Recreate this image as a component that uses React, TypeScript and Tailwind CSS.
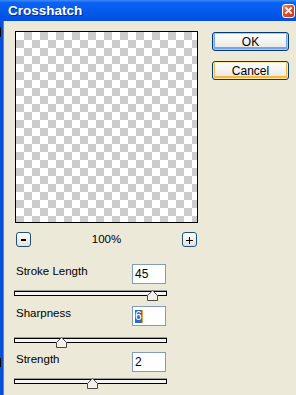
import React from "react";

const font = { fontFamily: '"Liberation Sans", Arial, sans-serif' };

function Thumb({ left }: { left: number }) {
  return (
    <svg
      className="absolute top-[-1px]"
      style={{ left }}
      width="11"
      height="11"
      viewBox="0 0 11 11"
    >
      <path d="M5.5 0.5 L10.5 5.5 L10.5 10.5 L0.5 10.5 L0.5 5.5 Z" fill="#F3F1E8" stroke="#4a4a4a" strokeWidth="1" />
    </svg>
  );
}

function Track({ thumb, className }: { thumb: number; className?: string }) {
  return (
    <div className={"relative ml-[-2px] w-[153px] h-[6px] border-t border-t-[#9d9d9d] bg-black p-[1px] " + (className || "")}>
      <div className="h-[3px] w-full bg-[#F6F5EF]" />
      <Thumb left={thumb} />
    </div>
  );
}

function Field({ label, children, className }: { label: string; children: React.ReactNode; className?: string }) {
  return (
    <div className={"flex items-center h-[20px] " + (className || "")}>
      <span className="mb-[4px] text-[11.5px] text-black leading-none">{label}</span>
      <div className="ml-auto mr-[1px] w-[34px] h-[20px] border border-[#7F9DB9] bg-white flex items-center pl-[2px] text-[12px] text-black leading-none">
        {children}
      </div>
    </div>
  );
}

export default function App() {
  return (
    <div className="w-[296px] h-[395px] overflow-hidden bg-[#ECE9D8] flex flex-col select-none" style={font}>
      {/* title bar */}
      <div className="h-[21px] flex items-center bg-[linear-gradient(to_bottom,#3f8cf8_0%,#0c63f2_12%,#0459ea_55%,#004fe0_100%)]">
        <span
          className="pl-[8px] text-[13.5px] font-bold text-white leading-none"
          style={{ textShadow: "1px 1px 0 #0a2a8a" }}
        >
          Crosshatch
        </span>
        <div className="ml-auto mr-[1px] w-[13px] h-[14px] rounded-[3px] border border-white bg-[linear-gradient(135deg,#f08a6a_0%,#e0502a_45%,#c5381a_100%)] flex items-center justify-center">
          <svg width="7" height="7" viewBox="0 0 7 7">
            <path d="M1 1 L6 6 M6 1 L1 6" stroke="white" strokeWidth="1.8" strokeLinecap="square" />
          </svg>
        </div>
      </div>
      <div className="flex flex-1">
        {/* left frame */}
        <div className="flex">
          <div className="w-[1px] flex flex-col bg-[#0a4fd8]">
            <div className="h-[6px]" />
            <div className="h-[10px] bg-black" />
            <div className="h-[321px]" />
            <div className="h-[9px] bg-black" />
          </div>
          <div className="w-[2px] bg-[#0a4fd8]" />
          <div className="w-[1px] bg-[#3c86f2]" />
        </div>
        {/* content */}
        <div className="flex pl-[11px] pt-[10px]">
          <div className="w-[183px] flex flex-col">
            <div className="w-[183px] h-[192px] border border-black bg-[conic-gradient(#cccccc_25%,#ffffff_0_50%,#cccccc_0_75%,#ffffff_0)] bg-[length:16px_16px]" />
            <div className="mt-[9px] h-[15px] flex items-center justify-between px-[1px]">
              <div className="w-[15px] h-[15px] rounded-[3px] border border-[#1c5180] bg-[linear-gradient(to_bottom,#ffffff,#e4e1d8)] flex items-center justify-center">
                <div className="w-[5px] h-[2px] bg-black mt-[1px]" />
              </div>
              <span className="text-[11.5px] text-black leading-none">100%</span>
              <div className="w-[15px] h-[15px] rounded-[3px] border border-[#1c5180] bg-[linear-gradient(to_bottom,#ffffff,#e4e1d8)] flex items-center justify-center">
                <svg width="7" height="7" viewBox="0 0 7 7" className="mt-[1px]">
                  <path d="M3.5 0 V7 M0 3.5 H7" stroke="black" strokeWidth="1" />
                </svg>
              </div>
            </div>
            <div className="mt-[17px] pl-[1px] w-[152px]">
              <Field label="Stroke Length">45</Field>
              <Track thumb={133} className="mt-[6px]" />
              <Field label="Sharpness" className="mt-[10px]">
                <span className="flex items-center">
                  <span className="bg-[#316AC5] text-white leading-[13px]">6</span>
                  <span className="w-[1px] h-[13px] bg-[#f0a030]" />
                </span>
              </Field>
              <Track thumb={42} className="mt-[11px]" />
              <Field label="Strength" className="mt-[9px]">2</Field>
              <Track thumb={73} className="mt-[6px]" />
            </div>
          </div>
          <div className="ml-[14px] pt-[1px] flex flex-col">
            <button className="w-[77px] h-[19px] rounded-[3px] border border-[#003c74] bg-[linear-gradient(to_bottom,#ffffff,#ecebe6_80%,#d6d0c5)] shadow-[inset_0_0_0_1px_#a8c8f5,inset_0_-1px_0_2px_#7ba2e7] text-[12px] text-black leading-none">
              OK
            </button>
            <button className="mt-[10px] w-[77px] h-[19px] rounded-[3px] border border-[#003c74] bg-[linear-gradient(to_bottom,#ffffff,#ecebe6_80%,#d6d0c5)] shadow-[inset_0_0_0_1px_#ffe7a2,inset_0_-1px_0_2px_#f5b840] text-[12px] text-black leading-none">
              Cancel
            </button>
          </div>
        </div>
      </div>
    </div>
  );
}
